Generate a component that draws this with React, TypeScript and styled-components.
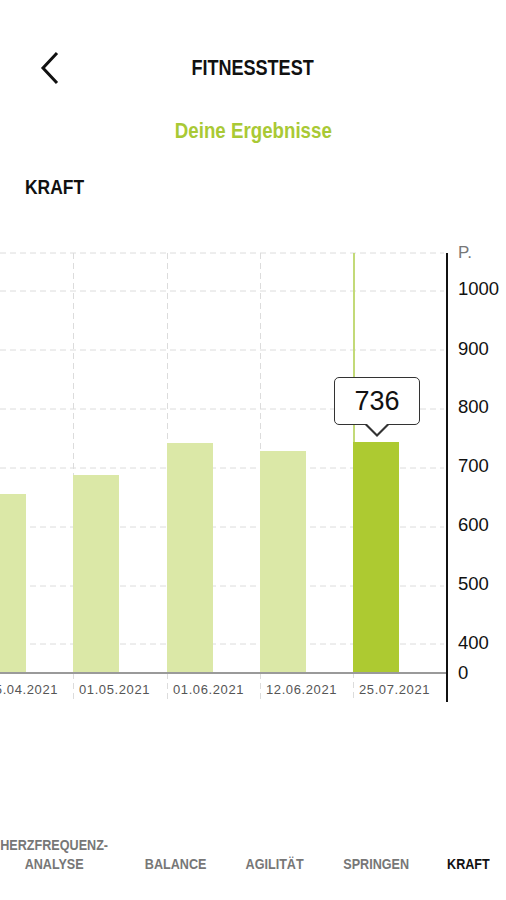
import styled, {createGlobalStyle} from 'styled-components'

const GlobalStyle = createGlobalStyle`
  html, body {
    margin: 0;
    padding: 0;
    background: #fff;
  }
  body {
    font-family: "Liberation Sans", Arial, sans-serif;
    overflow: hidden;
  }
`

const colors = {
  green: '#a9c935',
  greenBar: '#adca31',
  greenLight: '#dbe8a7',
  greenLine: '#c3da78',
  text: '#111',
  gray: '#777',
  grid: '#dcdcdc',
}

const sans = `"Liberation Sans", Arial, sans-serif`

// no condensed face is installed, so the bold headings are squeezed by hand
const Condensed = styled.span<{ $origin?: string; $scale?: number }>`
  display: inline-block;
  white-space: nowrap;
  transform: scaleX(${p => p.$scale ?? 0.82});
  transform-origin: ${p => p.$origin ?? 'center'};
`

const Page = styled.div`
  width: 506px;
  height: 900px;
  display: flex;
  flex-direction: column;
  overflow: hidden;
`

const Header = styled.header`
  margin-top: 40px;
  height: 56px;
  display: grid;
  grid-template-columns: 80px 1fr 80px;
  align-items: center;
`

const BackButton = styled.button`
  border: 0;
  background: none;
  padding: 0 0 0 40px;
  height: 56px;
  display: flex;
  align-items: center;
  cursor: pointer;
`

const Title = styled.h1`
  margin: 0;
  text-align: center;
  font-family: ${sans};
  font-weight: 700;
  font-size: 22px;
  color: ${colors.text};
`

const Subtitle = styled.h2`
  margin: 22px 0 0;
  line-height: 26px;
  text-align: center;
  font-family: ${sans};
  font-weight: 700;
  font-size: 22px;
  color: ${colors.green};
`

const Section = styled.h3`
  margin: 30px 0 0 25px;
  line-height: 26px;
  font-family: ${sans};
  font-weight: 700;
  font-size: 21px;
  color: ${colors.text};
`

const ChartArea = styled.div`
  position: relative;
  margin-top: 40px;
  width: 506px;
  height: 470px;

  svg {
    display: block;
  }
`

const Tooltip = styled.div`
  position: absolute;
  left: 334px;
  top: 137px;
  width: 86px;
  height: 48px;
  box-sizing: border-box;
  border: 1.5px solid #333;
  border-radius: 5px;
  background: #fff;
  display: flex;
  align-items: center;
  justify-content: center;
  font-family: ${sans};
  font-size: 27px;
  color: ${colors.text};

  &::after,
  &::before {
    content: "";
    position: absolute;
    left: 50%;
    transform: translateX(-50%);
    border-style: solid;
    border-color: transparent;
  }
  &::before {
    bottom: -13px;
    border-width: 12px 12px 0 12px;
    border-top-color: #333;
  }
  &::after {
    bottom: -10px;
    border-width: 11px 11px 0 11px;
    border-top-color: #fff;
  }
`

const TabBar = styled.nav`
  margin-top: 125px;
  display: grid;
  grid-template-columns: 108px 136px 62px 140px 44px;
  align-items: end;
`

const Tab = styled.div<{ $active?: boolean }>`
  display: flex;
  flex-direction: column;
  align-items: center;
  font-family: ${sans};
  font-weight: 700;
  font-size: 15px;
  line-height: 19px;
  color: ${p => (p.$active ? colors.text : colors.gray)};
`

const gridRows = [13, 51, 110, 169, 228, 287, 346, 404]
const axisLabels = [
  {v: '1000', y: 48},
  {v: '900', y: 108},
  {v: '800', y: 166},
  {v: '700', y: 225},
  {v: '600', y: 284},
  {v: '500', y: 343},
  {v: '400', y: 402},
  {v: '0', y: 432},
]

const bars = [
  {x: -20, top: 254, date: '25.04.2021', line: -1},
  {x: 73, top: 235, date: '01.05.2021', line: 73},
  {x: 167, top: 203, date: '01.06.2021', line: 167},
  {x: 260, top: 211, date: '12.06.2021', line: 260},
  {x: 353, top: 202, date: '25.07.2021', line: 353, active: true},
]

const BASE = 432

const Chevron = () => (
  <svg width="20" height="34" viewBox="0 0 20 34">
    <polyline points="17,2 3,17 17,32" fill="none" stroke="#111" strokeWidth="3" />
  </svg>
)

const Chart = () => (
  <ChartArea>
    <svg width="506" height="470" viewBox="0 0 506 470">
      {gridRows.map(y => (
        <line key={y} x1="0" x2="444" y1={y} y2={y} stroke={colors.grid} strokeWidth="1" strokeDasharray="6 4" />
      ))}
      {bars.filter(b => b.line > 0 && !b.active).map(b => (
        <line key={b.line} x1={b.line + 0.5} x2={b.line + 0.5} y1="13" y2="462" stroke={colors.grid} strokeWidth="1" strokeDasharray="6 4" />
      ))}
      <line x1="353.5" x2="353.5" y1={BASE} y2="462" stroke={colors.grid} strokeWidth="1" strokeDasharray="6 4" />
      {bars.map(b => (
        <rect key={b.date} x={b.x} y={b.top} width="46" height={BASE - b.top}
          fill={b.active ? colors.greenBar : colors.greenLight} />
      ))}
      <line x1="354" x2="354" y1="13" y2="202" stroke={colors.greenLine} strokeWidth="2" />
      <line x1="0" x2="446" y1={BASE + 1} y2={BASE + 1} stroke="#9a9a9a" strokeWidth="2" />
      <line x1="447" x2="447" y1="13" y2="462" stroke="#111" strokeWidth="2" />
      {bars.map(b => (
        <text key={b.date} x={b.line < 0 ? -13 : b.line + 6} y="454" fontSize="13" letterSpacing="0.6" fill="#555"
          fontFamily={sans}>{b.date}</text>
      ))}
      <text x="458" y="18" fontSize="17" fill="#777" fontFamily={sans}>P.</text>
      {axisLabels.map(l => (
        <text key={l.v} x="458" y={l.y + 6.5} fontSize="18.5" fill="#111" fontFamily={sans}>{l.v}</text>
      ))}
    </svg>
    <Tooltip>736</Tooltip>
  </ChartArea>
)

const tabs = [
  {label: ['HERZFREQUENZ-', 'ANALYSE']},
  {label: ['BALANCE']},
  {label: ['AGILITÄT']},
  {label: ['SPRINGEN']},
  {label: ['KRAFT'], active: true},
]

const App = () => {
  return (
    <Page>
      <GlobalStyle />
      <Header>
        <BackButton aria-label="Zurück"><Chevron /></BackButton>
        <Title><Condensed>FITNESSTEST</Condensed></Title>
        <div />
      </Header>
      <Subtitle><Condensed $scale={0.85}>Deine Ergebnisse</Condensed></Subtitle>
      <Section><Condensed $origin="left" $scale={0.83}>KRAFT</Condensed></Section>
      <Chart />
      <TabBar>
        {tabs.map(t => (
          <Tab key={t.label[0]} $active={t.active}>
            {t.label.map(line => (
              <Condensed key={line} $scale={0.84}>{line}</Condensed>
            ))}
          </Tab>
        ))}
      </TabBar>
    </Page>
  )
}

export default App
